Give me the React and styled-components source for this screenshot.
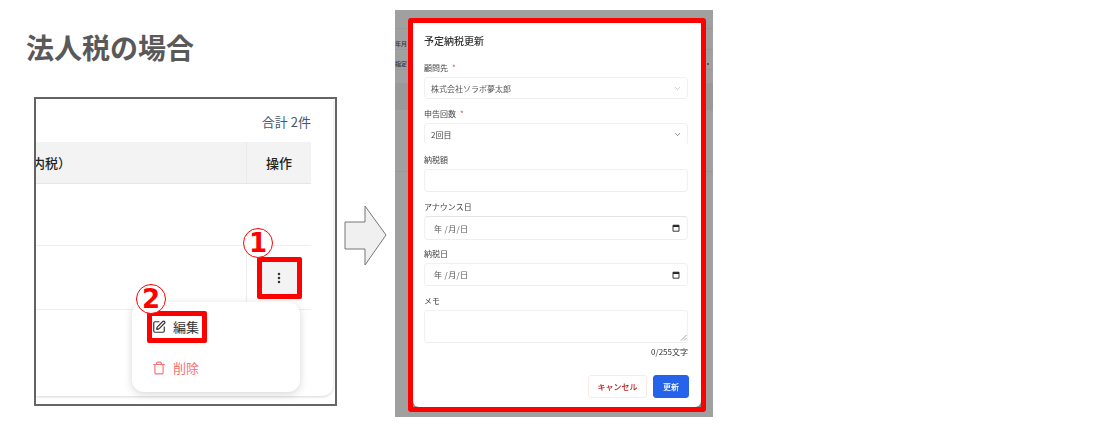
import React from "react";
import styled, { createGlobalStyle } from "styled-components";
import { SquarePen, Trash, EllipsisVertical, ChevronDown } from "lucide-react";

const FONT = `"Noto Sans CJK JP", "Noto Sans", sans-serif`;

const Global = createGlobalStyle`
  html, body { margin: 0; padding: 0; background: #fff; }
  body { font-family: ${FONT}; }
`;

const Page = styled.div`
  width: 1108px;
  height: 432px;
  display: flex;
  align-items: flex-start;
  overflow: hidden;
`;

const LeftColumn = styled.section`
  width: 337px;
  padding-left: 27px;
  box-sizing: border-box;
  flex: none;
`;

const Title = styled.h1`
  margin: 29px 0 0 -1px;
  height: 36px;
  font-size: 28px;
  line-height: 36px;
  font-weight: 700;
  color: #595959;
  white-space: nowrap;
`;

const Frame = styled.div`
  position: relative;
  box-sizing: border-box;
  width: 303px;
  height: 309px;
  margin: 32px 0 0 7px;
  border: 2px solid #666;
  background: #fff;
`;

const Card = styled.div`
  width: 297px;
  height: 297px;
  padding-right: 22px;
  box-sizing: border-box;
  border-radius: 0 0 10px 0;
  box-shadow: 0 1px 3px rgba(0, 0, 0, 0.16);
  background: #fff;
`;

const Total = styled.div`
  height: 43px;
  box-sizing: border-box;
  padding-top: 13px;
  text-align: right;
  font-size: 13px;
  line-height: 20px;
  color: #4b5563;
`;

const HeaderRow = styled.div`
  display: flex;
  height: 42px;
  box-sizing: border-box;
  background: #f3f3f3;
  border-bottom: 1px solid #e6e6e6;
  font-size: 13px;
  font-weight: 500;
  color: #222;
`;

const HeadMain = styled.div`
  flex: 1;
  overflow: hidden;
  display: flex;
  align-items: center;
  white-space: nowrap;
`;

const ClippedText = styled.span`
  margin-left: -4px;
`;

const HeadAction = styled.div`
  width: 64px;
  display: flex;
  align-items: center;
  justify-content: center;
  border-left: 1px solid #ebebeb;
`;

const Row = styled.div`
  display: flex;
  height: ${(p) => p.$h}px;
  box-sizing: border-box;
  border-bottom: 1px solid #eeeeee;
`;

const RowMain = styled.div`
  flex: 1;
`;

const ActionCell = styled.div`
  width: 64px;
  display: flex;
  align-items: center;
  justify-content: center;
  border-left: 1px solid #eeeeee;
`;

const KebabButton = styled.button`
  width: 45px;
  height: 42px;
  padding: 0;
  box-sizing: border-box;
  border: 5px solid #ff0000;
  border-radius: 2px;
  background: #f3f3f3;
  color: #333;
  display: flex;
  align-items: center;
  justify-content: center;
`;

const Menu = styled.div`
  position: absolute;
  left: 96px;
  top: 203px;
  width: 168px;
  height: 90px;
  border-radius: 12px;
  background: #fff;
  box-shadow: 0 2px 8px rgba(0, 0, 0, 0.16);
`;

const MenuItem = styled.div`
  position: absolute;
  left: ${(p) => p.$left}px;
  top: ${(p) => p.$top}px;
  display: flex;
  align-items: center;
  gap: 7px;
  font-size: 13px;
  line-height: 18px;
  color: ${(p) => p.$color};
`;

const RedBox = styled.div`
  position: absolute;
  left: 15px;
  top: 9px;
  width: 60px;
  height: 32px;
  box-sizing: border-box;
  border: 5px solid #ff0000;
  border-radius: 2px;
  background: #fff;
`;

const Circled = styled.div`
  position: absolute;
  left: ${(p) => p.$left}px;
  top: ${(p) => p.$top}px;
  width: 30px;
  height: 30px;
  box-sizing: border-box;
  border: 1px solid #ff0000;
  border-radius: 50%;
  background: #fff;
  display: flex;
  align-items: center;
  justify-content: center;
  color: #ff0000;
  font-family: "DejaVu Sans", sans-serif;
  font-size: 26px;
  font-weight: 700;
  line-height: 1;
`;

const ArrowSlot = styled.div`
  flex: none;
  margin: 205px 0 0 7px;
  width: 44px;
  height: 62px;
`;

const Shot = styled.div`
  position: relative;
  flex: none;
  margin: 10px 0 0 7px;
  width: 318px;
  height: 407px;
  background: #a0a0a0;
  overflow: hidden;
`;

const GhostText = styled.span`
  position: absolute;
  right: 306px;
  top: ${(p) => p.$top}px;
  font-size: 6px;
  line-height: 10px;
  font-weight: 500;
  color: #333;
  white-space: nowrap;
`;

const GhostLine = styled.div`
  position: absolute;
  left: 0;
  right: 0;
  top: ${(p) => p.$top}px;
  height: 1px;
  background: #989898;
`;

const GhostBand = styled.div`
  position: absolute;
  left: 0;
  right: 0;
  top: 73px;
  height: 27px;
  background: #999999;
`;

const GhostDot = styled.div`
  position: absolute;
  left: 312px;
  top: 53px;
  width: 2px;
  height: 2px;
  background: #8a4a4a;
`;

const Dialog = styled.div`
  position: absolute;
  left: 13px;
  top: 8px;
  width: 298px;
  height: 394px;
  box-sizing: border-box;
  border: 5px solid #ff0000;
  border-radius: 3px;
  background: #8a8a8a;
`;

const DialogBody = styled.form`
  height: 100%;
  box-sizing: border-box;
  background: #fff;
  border-radius: 0 0 6px 6px;
  padding: 8px 13px 0 11px;
  filter: blur(0.35px);
`;

const DialogTitle = styled.h2`
  margin: 0;
  height: 20px;
  font-size: 10px;
  line-height: 20px;
  font-weight: 500;
  color: #333;
`;

const Field = styled.div`
  margin-top: ${(p) => p.$mt}px;
`;

const Label = styled.div`
  height: 13px;
  font-size: 8px;
  line-height: 8px;
  color: #444;
`;

const Required = styled.span`
  color: #ef4444;
  margin-left: 4px;
`;

const Control = styled.div`
  box-sizing: border-box;
  height: ${(p) => p.$h}px;
  border: 1px solid #f0f0f0;
  border-top-color: ${(p) => (p.$strong ? "#e4e4e4" : "#f0f0f0")};
  border-bottom-color: ${(p) => (p.$open ? "transparent" : "#eeeeee")};
  border-radius: 4px;
  padding: 0 ${(p) => (p.$date ? 7 : 5)}px 0 ${(p) => (p.$date ? 9 : 6)}px;
  display: flex;
  align-items: center;
  justify-content: space-between;
  font-size: 8px;
  color: ${(p) => p.$color || "#444"};
  position: relative;
`;

const DateText = styled.span`
  letter-spacing: 0.4px;
  color: #555;
`;

const Resize = styled.svg`
  position: absolute;
  right: 0;
  bottom: 1px;
`;

const Counter = styled.div`
  margin-top: 3px;
  text-align: right;
  font-size: 8px;
  line-height: 11px;
  color: #333;
`;

const Actions = styled.div`
  margin: 18px -1px 0 0;
  display: flex;
  justify-content: flex-end;
  gap: 6px;
`;

const DialogButton = styled.button`
  height: 23px;
  width: ${(p) => p.$w}px;
  padding: 0;
  box-sizing: border-box;
  border-radius: 3px;
  font-family: inherit;
  font-size: 8px;
  font-weight: 500;
  border: 1px solid ${(p) => (p.$primary ? "#2563eb" : "#fde8e8")};
  background: ${(p) => (p.$primary ? "#2563eb" : "#fff")};
  color: ${(p) => (p.$primary ? "#fff" : "#b91c1c")};
`;

const CalendarIcon = () => (
  <svg width="8" height="8" viewBox="0 0 8 8" aria-hidden="true">
    <path d="M1 1.2h6v6H1z" fill="none" stroke="#222" strokeWidth="0.9" />
    <path d="M1 1.2h6v1.8H1z" fill="#222" />
  </svg>
);

export default function App() {
  return (
    <Page>
      <Global />
      <LeftColumn>
        <Title>法人税の場合</Title>
        <Frame>
          <Card>
            <Total>合計 2件</Total>
            <HeaderRow>
              <HeadMain>
                <ClippedText>内税）</ClippedText>
              </HeadMain>
              <HeadAction>操作</HeadAction>
            </HeaderRow>
            <Row $h={62} />
            <Row $h={64}>
              <RowMain />
              <ActionCell>
                <KebabButton type="button" aria-label="操作">
                  <EllipsisVertical size={14} strokeWidth={2.4} />
                </KebabButton>
              </ActionCell>
            </Row>
          </Card>
          <Menu>
            <RedBox />
            <MenuItem $left={20} $top={16} $color="#333">
              <SquarePen size={14} strokeWidth={2} />
              編集
            </MenuItem>
            <MenuItem $left={20} $top={57} $color="#f87171">
              <Trash size={14} strokeWidth={2} />
              削除
            </MenuItem>
          </Menu>
          <Circled $left={207} $top={129}>1</Circled>
          <Circled $left={100} $top={185}>2</Circled>
        </Frame>
      </LeftColumn>

      <ArrowSlot>
        <svg width="44" height="62" viewBox="0 0 44 62" aria-hidden="true">
          <path
            d="M1 17H21V1L42 30 21 60V44H1Z"
            fill="#f0f0f0"
            stroke="#777"
            strokeWidth="1"
          />
        </svg>
      </ArrowSlot>

      <Shot>
        <GhostLine $top={18} />
        <GhostLine $top={39} />
        <GhostLine $top={59} />
        <GhostBand />
        <GhostLine $top={161} />
        <GhostText $top={29}>年月</GhostText>
        <GhostText $top={49}>指定</GhostText>
        <GhostDot />
        <Dialog>
          <DialogBody>
            <DialogTitle>予定納税更新</DialogTitle>
            <Field $mt={13}>
              <Label>
                顧問先<Required>*</Required>
              </Label>
              <Control $h={22} $color="#555">
                株式会社ソラボ夢太郎
                <ChevronDown size={9} color="#bbb" />
              </Control>
            </Field>
            <Field $mt={11}>
              <Label>
                申告回数<Required>*</Required>
              </Label>
              <Control $h={22} $open>
                2回目
                <ChevronDown size={9} color="#666" />
              </Control>
            </Field>
            <Field $mt={11}>
              <Label>納税額</Label>
              <Control $h={23} />
            </Field>
            <Field $mt={11}>
              <Label>アナウンス日</Label>
              <Control $h={24} $strong $date>
                <DateText>年 /月/日</DateText>
                <CalendarIcon />
              </Control>
            </Field>
            <Field $mt={10}>
              <Label>納税日</Label>
              <Control $h={23} $date>
                <DateText>年 /月/日</DateText>
                <CalendarIcon />
              </Control>
            </Field>
            <Field $mt={11}>
              <Label>メモ</Label>
              <Control $h={33}>
                <Resize width="7" height="7" viewBox="0 0 7 7" aria-hidden="true">
                  <path d="M1 6.5 6.5 1M4 6.5 6.5 4" stroke="#777" strokeWidth="0.7" />
                </Resize>
              </Control>
            </Field>
            <Counter>0/255文字</Counter>
            <Actions>
              <DialogButton type="button" $w={59}>キャンセル</DialogButton>
              <DialogButton type="button" $w={36} $primary>更新</DialogButton>
            </Actions>
          </DialogBody>
        </Dialog>
      </Shot>
    </Page>
  );
}
